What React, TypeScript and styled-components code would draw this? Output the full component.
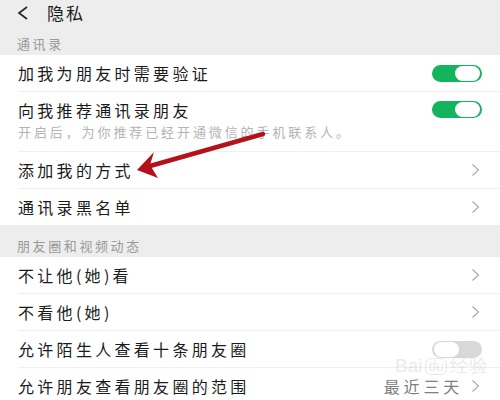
import React from "react";
import styled, { createGlobalStyle } from "styled-components";

const GlobalStyle = createGlobalStyle`
  html, body {
    margin: 0;
    padding: 0;
    background: #ededed;
  }
  body {
    font-family: "Noto Sans CJK SC", "Noto Sans", sans-serif;
    color: #1b1b1b;
  }
`;

const Page = styled.div`
  position: relative;
  width: 500px;
  height: 400px;
  overflow: hidden;
  background: #ededed;
`;

const Header = styled.div`
  height: 25px;
  display: flex;
  align-items: center;
  padding-left: 17px;
  gap: 19px;
`;

const Back = styled.span`
  display: flex;
  width: 11px;
  height: 14px;
`;

const Title = styled.span`
  font-size: 17px;
  letter-spacing: 2px;
  line-height: 20px;
`;

const SectionLabel = styled.div<{ $top: number }>`
  padding: ${(p) => p.$top}px 17px 4px;
  font-size: 13px;
  line-height: 14px;
  letter-spacing: 2.6px;
  color: #999;
`;

const List = styled.div`
  background: #fff;
`;

const Row = styled.div<{ $tall?: boolean }>`
  display: flex;
  align-items: ${(p) => (p.$tall ? "flex-start" : "center")};
  min-height: ${(p) => (p.$tall ? 51 : 36)}px;
  padding-top: ${(p) => (p.$tall ? 8 : 0)}px;
  margin-left: 18px;
  padding-right: 18px;
  border-bottom: 1px solid #efefef;
  &:last-child {
    border-bottom: none;
  }
`;

const Texts = styled.div`
  flex: 1;
  display: flex;
  flex-direction: column;
  gap: 4px;
`;

const Label = styled.span`
  font-size: 16px;
  line-height: 20px;
  letter-spacing: 3.3px;
`;

const Sub = styled.span`
  font-size: 13px;
  line-height: 16px;
  letter-spacing: 2.9px;
  color: #b4b4b4;
`;

const Value = styled.span`
  font-size: 16px;
  letter-spacing: 3.8px;
  color: #808080;
  margin-right: 8px;
`;

const Toggle = styled.span<{ $on: boolean }>`
  position: relative;
  flex: none;
  width: 50px;
  height: 17px;
  margin-top: 1px;
  border-radius: 9px;
  background: ${(p) => (p.$on ? "#13b45c" : "#d8d8d8")};
  &::after {
    content: "";
    position: absolute;
    top: 1px;
    ${(p) => (p.$on ? "right: 2px;" : "left: 2px;")}
    width: 25px;
    height: 15px;
    border-radius: 8px;
    background: #fff;
  }
`;

const Chevron = () => (
  <svg width="9" height="14" viewBox="0 0 9 14" style={{ marginRight: 2 }}>
    <path d="M1.5 1.5 L7.5 7 L1.5 12.5" fill="none" stroke="#a8a8a8" strokeWidth="1.1" />
  </svg>
);

const Overlay = styled.svg`
  position: absolute;
  left: 0;
  top: 0;
  pointer-events: none;
`;

const Watermark = styled.div`
  position: absolute;
  left: 395px;
  top: 353px;
  display: flex;
  align-items: center;
  gap: 3px;
  font-family: "Liberation Sans", sans-serif;
  font-size: 19px;
  color: rgba(185, 185, 185, 0.3);
  pointer-events: none;
`;

const Du = styled.span`
  border: 1px solid rgba(185, 185, 185, 0.35);
  border-radius: 6px;
  padding: 0 2px;
  font-size: 14px;
  line-height: 15px;
`;

type Item = {
  label: string;
  sub?: string;
  toggle?: boolean;
  value?: string;
};

const contacts: Item[] = [
  { label: "加我为朋友时需要验证", toggle: true },
  { label: "向我推荐通讯录朋友", sub: "开启后，为你推荐已经开通微信的手机联系人。", toggle: true },
  { label: "添加我的方式" },
  { label: "通讯录黑名单" },
];

const moments: Item[] = [
  { label: "不让他(她)看" },
  { label: "不看他(她)" },
  { label: "允许陌生人查看十条朋友圈", toggle: false },
  { label: "允许朋友查看朋友圈的范围", value: "最近三天" },
];

const Rows = ({ items }: { items: Item[] }) => (
  <List>
    {items.map((it) => (
      <Row key={it.label} $tall={!!it.sub}>
        <Texts>
          <Label>{it.label}</Label>
          {it.sub && <Sub>{it.sub}</Sub>}
        </Texts>
        {it.value && <Value>{it.value}</Value>}
        {it.toggle === undefined ? <Chevron /> : <Toggle $on={it.toggle} />}
      </Row>
    ))}
  </List>
);

export default function App() {
  return (
    <Page>
      <GlobalStyle />
      <Header>
        <Back>
          <svg width="11" height="14" viewBox="0 0 11 14">
            <path d="M10 1 L2 7 L10 13" fill="none" stroke="#222" strokeWidth="1.6" />
          </svg>
        </Back>
        <Title>隐私</Title>
      </Header>
      <SectionLabel $top={12}>通讯录</SectionLabel>
      <Rows items={contacts} />
      <SectionLabel $top={14}>朋友圈和视频动态</SectionLabel>
      <Rows items={moments} />
      <Watermark>
        <span>Bai</span>
        <Du>du</Du>
        <span>经验</span>
      </Watermark>
      <Overlay width="500" height="400" viewBox="0 0 500 400">
        <path d="M263 134 L150 166" stroke="#b3121a" strokeWidth="4.5" strokeLinecap="round" />
        <polygon points="137,170 154,152 150,165 158,178" fill="#b3121a" />
      </Overlay>
    </Page>
  );
}
